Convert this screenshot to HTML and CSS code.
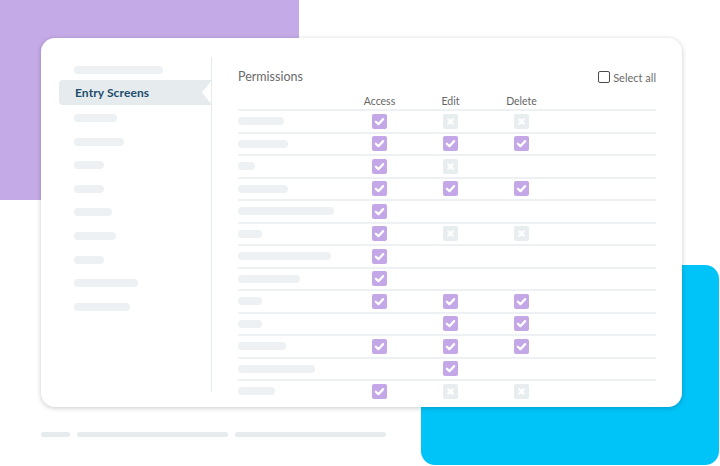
FILE: index.html
```html
<!DOCTYPE html>
<html lang="en">
<head>
<meta charset="utf-8">
<title>Permissions</title>
<link rel="stylesheet" href="styles.css">
</head>
<body>
<div class="stage">
  <div class="blob blob-purple"></div>
  <div class="blob blob-blue"></div>

  <div class="card">
    <aside class="sidebar">
      <div class="bar" style="width:89px"></div>
      <div class="tab">Entry Screens</div>
      <div class="side-list">
        <div class="bar" style="width:43px"></div>
        <div class="bar" style="width:50px"></div>
        <div class="bar" style="width:30px"></div>
        <div class="bar" style="width:30px"></div>
        <div class="bar" style="width:38px"></div>
        <div class="bar" style="width:42px"></div>
        <div class="bar" style="width:30px"></div>
        <div class="bar" style="width:64px"></div>
        <div class="bar" style="width:56px"></div>
      </div>
    </aside>

    <section class="main">
      <div class="title-row">
        <span class="title">Permissions</span>
        <label class="select-all"><span class="box"></span><span>Select all</span></label>
      </div>
      <div class="grid head">
        <span></span>
        <span class="col">Access</span>
        <span class="col">Edit</span>
        <span class="col">Delete</span>
      </div>

      <div class="grid row">
        <div class="bar" style="width:46px"></div>
        <span class="cb on"><svg viewBox="0 0 14 14"><path d="M3.6 7.2 L6 9.5 L10.4 4.8"/></svg></span>
        <span class="cb off"><svg viewBox="0 0 14 14"><path d="M5 5 L9 9 M9 5 L5 9"/></svg></span>
        <span class="cb off"><svg viewBox="0 0 14 14"><path d="M5 5 L9 9 M9 5 L5 9"/></svg></span>
      </div>
      <div class="grid row">
        <div class="bar" style="width:50px"></div>
        <span class="cb on"><svg viewBox="0 0 14 14"><path d="M3.6 7.2 L6 9.5 L10.4 4.8"/></svg></span>
        <span class="cb on"><svg viewBox="0 0 14 14"><path d="M3.6 7.2 L6 9.5 L10.4 4.8"/></svg></span>
        <span class="cb on"><svg viewBox="0 0 14 14"><path d="M3.6 7.2 L6 9.5 L10.4 4.8"/></svg></span>
      </div>
      <div class="grid row">
        <div class="bar" style="width:17px"></div>
        <span class="cb on"><svg viewBox="0 0 14 14"><path d="M3.6 7.2 L6 9.5 L10.4 4.8"/></svg></span>
        <span class="cb off"><svg viewBox="0 0 14 14"><path d="M5 5 L9 9 M9 5 L5 9"/></svg></span>
        <span></span>
      </div>
      <div class="grid row">
        <div class="bar" style="width:50px"></div>
        <span class="cb on"><svg viewBox="0 0 14 14"><path d="M3.6 7.2 L6 9.5 L10.4 4.8"/></svg></span>
        <span class="cb on"><svg viewBox="0 0 14 14"><path d="M3.6 7.2 L6 9.5 L10.4 4.8"/></svg></span>
        <span class="cb on"><svg viewBox="0 0 14 14"><path d="M3.6 7.2 L6 9.5 L10.4 4.8"/></svg></span>
      </div>
      <div class="grid row">
        <div class="bar" style="width:96px"></div>
        <span class="cb on"><svg viewBox="0 0 14 14"><path d="M3.6 7.2 L6 9.5 L10.4 4.8"/></svg></span>
        <span></span>
        <span></span>
      </div>
      <div class="grid row">
        <div class="bar" style="width:24px"></div>
        <span class="cb on"><svg viewBox="0 0 14 14"><path d="M3.6 7.2 L6 9.5 L10.4 4.8"/></svg></span>
        <span class="cb off"><svg viewBox="0 0 14 14"><path d="M5 5 L9 9 M9 5 L5 9"/></svg></span>
        <span class="cb off"><svg viewBox="0 0 14 14"><path d="M5 5 L9 9 M9 5 L5 9"/></svg></span>
      </div>
      <div class="grid row">
        <div class="bar" style="width:93px"></div>
        <span class="cb on"><svg viewBox="0 0 14 14"><path d="M3.6 7.2 L6 9.5 L10.4 4.8"/></svg></span>
        <span></span>
        <span></span>
      </div>
      <div class="grid row">
        <div class="bar" style="width:62px"></div>
        <span class="cb on"><svg viewBox="0 0 14 14"><path d="M3.6 7.2 L6 9.5 L10.4 4.8"/></svg></span>
        <span></span>
        <span></span>
      </div>
      <div class="grid row">
        <div class="bar" style="width:24px"></div>
        <span class="cb on"><svg viewBox="0 0 14 14"><path d="M3.6 7.2 L6 9.5 L10.4 4.8"/></svg></span>
        <span class="cb on"><svg viewBox="0 0 14 14"><path d="M3.6 7.2 L6 9.5 L10.4 4.8"/></svg></span>
        <span class="cb on"><svg viewBox="0 0 14 14"><path d="M3.6 7.2 L6 9.5 L10.4 4.8"/></svg></span>
      </div>
      <div class="grid row">
        <div class="bar" style="width:24px"></div>
        <span></span>
        <span class="cb on"><svg viewBox="0 0 14 14"><path d="M3.6 7.2 L6 9.5 L10.4 4.8"/></svg></span>
        <span class="cb on"><svg viewBox="0 0 14 14"><path d="M3.6 7.2 L6 9.5 L10.4 4.8"/></svg></span>
      </div>
      <div class="grid row">
        <div class="bar" style="width:48px"></div>
        <span class="cb on"><svg viewBox="0 0 14 14"><path d="M3.6 7.2 L6 9.5 L10.4 4.8"/></svg></span>
        <span class="cb on"><svg viewBox="0 0 14 14"><path d="M3.6 7.2 L6 9.5 L10.4 4.8"/></svg></span>
        <span class="cb on"><svg viewBox="0 0 14 14"><path d="M3.6 7.2 L6 9.5 L10.4 4.8"/></svg></span>
      </div>
      <div class="grid row">
        <div class="bar" style="width:77px"></div>
        <span></span>
        <span class="cb on"><svg viewBox="0 0 14 14"><path d="M3.6 7.2 L6 9.5 L10.4 4.8"/></svg></span>
        <span></span>
      </div>
      <div class="grid row">
        <div class="bar" style="width:37px"></div>
        <span class="cb on"><svg viewBox="0 0 14 14"><path d="M3.6 7.2 L6 9.5 L10.4 4.8"/></svg></span>
        <span class="cb off"><svg viewBox="0 0 14 14"><path d="M5 5 L9 9 M9 5 L5 9"/></svg></span>
        <span class="cb off"><svg viewBox="0 0 14 14"><path d="M5 5 L9 9 M9 5 L5 9"/></svg></span>
      </div>
    </section>
  </div>

  <div class="footer-bars">
    <div class="fbar fbar-short"></div>
    <div class="fbar fbar-long"></div>
    <div class="fbar fbar-long"></div>
  </div>
</div>
</body>
</html>
```

FILE: styles.css
```css
* { box-sizing: border-box; }

html, body {
  margin: 0;
  padding: 0;
  background: #ffffff;
}

body {
  font-family: "Lato", "Liberation Sans", sans-serif;
}

.stage {
  position: relative;
  width: 720px;
  height: 466px;
  overflow: hidden;
  background: #ffffff;
  padding: 38px 0 0 41px;
}

.blob {
  position: absolute;
  border-radius: 14px;
}

.blob-purple {
  left: -20px;
  top: -20px;
  width: 319px;
  height: 220px;
  background: #c5aae8;
}

.blob-blue {
  left: 421px;
  top: 265px;
  width: 298px;
  height: 200px;
  background: #00c3f8;
}

.card {
  position: relative;
  z-index: 1;
  width: 641px;
  height: 369px;
  background: #ffffff;
  border-radius: 14px;
  box-shadow: 0 1px 5px rgba(0, 0, 0, 0.22);
  padding: 19px 0 15px 0;
  display: flex;
}

/* sidebar */
.sidebar {
  width: 171px;
  flex: none;
  border-right: 1px solid #e6eaed;
  padding-top: 9px;
  display: flex;
  flex-direction: column;
  align-items: flex-start;
}

.bar {
  flex: none;
  height: 8px;
  border-radius: 4px;
  background: #edf1f4;
}

.sidebar > .bar {
  margin-left: 33px;
}

.tab {
  flex: none;
  margin-top: 6px;
  margin-left: 18px;
  width: 153px;
  margin-right: -1px;
  height: 25px;
  background: #e6ebee;
  border-radius: 4px 0 0 4px;
  clip-path: polygon(0 0, 100% 0, calc(100% - 10px) 50%, 100% 100%, 0 100%);
  padding-left: 16px;
  display: flex;
  align-items: center;
  font-size: 12px;
  font-weight: 700;
  color: #1c4d6d;
  letter-spacing: 0.1px;
}

.side-list {
  flex: none;
  margin-top: 9px;
  margin-left: 33px;
  display: flex;
  flex-direction: column;
  gap: 15.6px;
}

/* main */
.main {
  flex: 1;
  padding: 0 26px 0 26px;
  display: flex;
  flex-direction: column;
}

.title-row {
  flex: none;
  margin-top: 11px;
  height: 16px;
  display: flex;
  align-items: center;
  justify-content: space-between;
}

.title {
  font-size: 12.5px;
  color: #6a6a6a;
}

.select-all {
  display: flex;
  align-items: center;
  gap: 3px;
  font-size: 11px;
  color: #6a6a6a;
  margin-top: 2px;
}

.select-all .box {
  width: 12px;
  height: 12px;
  border: 1.5px solid #4a4a4a;
  border-radius: 2px;
}

.grid {
  flex: none;
  display: grid;
  grid-template-columns: 106px 71px 71px 71px 1fr;
  align-items: center;
}

.head {
  margin-top: 9px;
  height: 16px;
  font-size: 10.5px;
  color: #666666;
}

.col {
  text-align: center;
}

.row {
  height: 22.5px;
  border-top: 2px solid #edf1f4;
}

.cb {
  justify-self: center;
  width: 15px;
  height: 15px;
  border-radius: 2px;
  display: flex;
}

.cb svg {
  width: 100%;
  height: 100%;
  fill: none;
  stroke: #ffffff;
  stroke-width: 2.1;
  stroke-linecap: round;
  stroke-linejoin: round;
}

.cb.on {
  background: #c4a7e7;
}

.cb.off {
  background: #e8edf0;
}

/* footer bars */
.footer-bars {
  margin-top: 25px;
  display: flex;
  gap: 7px;
}

.fbar {
  height: 4.5px;
  border-radius: 3px;
  background: #e6ebee;
}

.fbar-short { width: 29px; }
.fbar-long { width: 151px; }
```
